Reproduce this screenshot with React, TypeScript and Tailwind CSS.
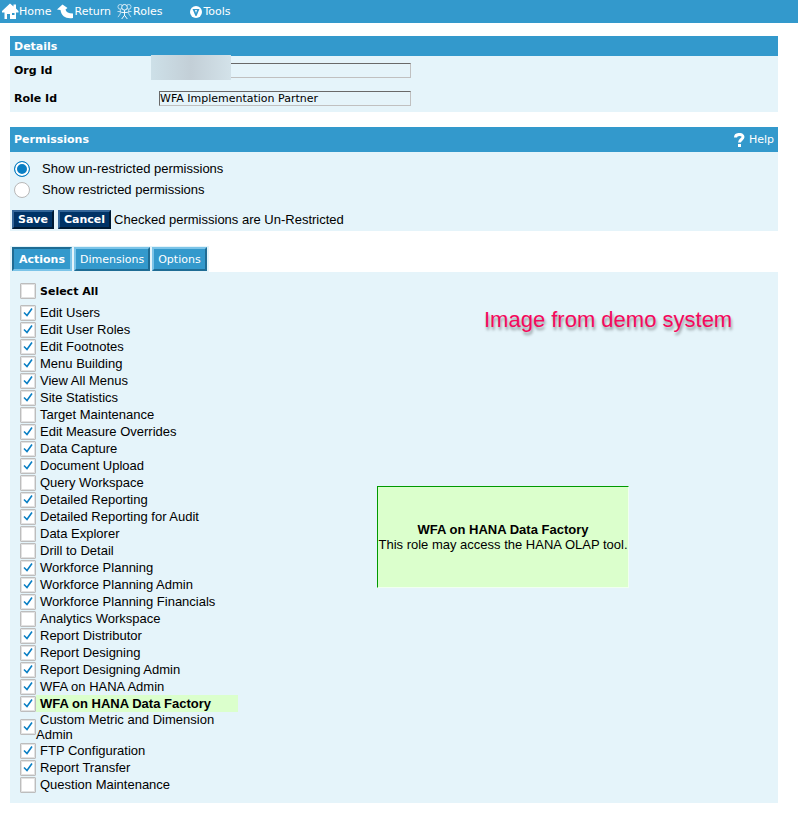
import { useState } from "react";

type Permission = { name: string; checked: boolean };

const PERMISSIONS: Permission[] = [
  { name: "Edit Users", checked: true },
  { name: "Edit User Roles", checked: true },
  { name: "Edit Footnotes", checked: true },
  { name: "Menu Building", checked: true },
  { name: "View All Menus", checked: true },
  { name: "Site Statistics", checked: true },
  { name: "Target Maintenance", checked: false },
  { name: "Edit Measure Overrides", checked: true },
  { name: "Data Capture", checked: true },
  { name: "Document Upload", checked: true },
  { name: "Query Workspace", checked: false },
  { name: "Detailed Reporting", checked: true },
  { name: "Detailed Reporting for Audit", checked: true },
  { name: "Data Explorer", checked: false },
  { name: "Drill to Detail", checked: false },
  { name: "Workforce Planning", checked: true },
  { name: "Workforce Planning Admin", checked: true },
  { name: "Workforce Planning Financials", checked: true },
  { name: "Analytics Workspace", checked: false },
  { name: "Report Distributor", checked: true },
  { name: "Report Designing", checked: true },
  { name: "Report Designing Admin", checked: true },
  { name: "WFA on HANA Admin", checked: true },
  { name: "WFA on HANA Data Factory", checked: true },
  { name: "Custom Metric and Dimension Admin", checked: true },
  { name: "FTP Configuration", checked: true },
  { name: "Report Transfer", checked: true },
  { name: "Question Maintenance", checked: false },
];

const ACTIVE = "WFA on HANA Data Factory";

function HomeIcon() {
  return (
    <svg width="17" height="17" viewBox="0 0 17 17" fill="#fff">
      <path d="M8 0.500 0 8v1.500h2.500V16H5v-5h3v5h6V9.500h2.500V8L14 5.500V1.500h-2.500v2z" />
      <path d="M10 10h2.500v2H10z" fill="#3399cc" />
    </svg>
  );
}

function ReturnIcon() {
  return (
    <svg width="17" height="15" viewBox="0 0 17 15" fill="#fff">
      <path d="M0 5.500 5.500 0.500 10.500 4 8.500 5.500C9 8 11.500 9.500 16 9.500V14C9 15 4.500 12.500 3.500 6z" />
    </svg>
  );
}

function RolesIcon() {
  return (
    <svg
      width="15"
      height="17"
      viewBox="0 0 16 17"
      fill="none"
      stroke="#c4e2f2"
      strokeWidth="1"
    >
      <circle cx="3.500" cy="3.500" r="2.500" />
      <circle cx="12.500" cy="3.500" r="2.500" />
      <path d="M3.500 6v5M0.500 8.500h4M3.500 11 1 14.500M12.500 6v5M11.500 8.500h4M12.500 11 15 14.500" />
      <circle cx="8" cy="4" r="3" fill="#3399cc" stroke="#fff" />
      <path d="M8 7v6M4.500 9.500h7M8 12.500 5 16.500M8 12.500l3 4" stroke="#fff" />
    </svg>
  );
}

function ToolsIcon() {
  return (
    <svg width="12" height="12" viewBox="0 0 12 12">
      <circle cx="6" cy="6" r="6" fill="#fff" />
      <path d="M2.500 3h7L6.500 10h-1z" fill="#3399cc" />
      <path d="M5 4h2L6 7z" fill="#fff" />
    </svg>
  );
}

function HelpIcon() {
  return (
    <svg width="11" height="14" viewBox="0 0 11 14">
      <path
        d="M1.500 4.500C1.500 0.500 9 0.500 9 4c0 2.500-3.500 2.500-3.500 5.500"
        fill="none"
        stroke="#fff"
        strokeWidth="3"
      />
      <path d="M4 11h3v3H4z" fill="#fff" />
    </svg>
  );
}

function CheckBox({
  id,
  checked,
  onChange,
}: {
  id: string;
  checked: boolean;
  onChange: () => void;
}) {
  return (
    <span className="grid shrink-0">
      <input
        id={id}
        type="checkbox"
        checked={checked}
        onChange={onChange}
        className="peer col-start-1 row-start-1 size-4 appearance-none rounded-[1px] border border-[#bdbdbd] bg-white shadow-[inset_0_0_0_1px_#e2e2e2]"
      />
      <svg
        viewBox="0 0 16 16"
        className="pointer-events-none invisible col-start-1 row-start-1 size-4 peer-checked:visible"
        fill="none"
        stroke="#0a7fc4"
        strokeWidth="1.600"
      >
        <path d="M4 7.500 7 10.500 12 3.500" />
      </svg>
    </span>
  );
}

function Tab({
  label,
  active,
  onClick,
}: {
  label: string;
  active: boolean;
  onClick: () => void;
}) {
  return (
    <button
      type="button"
      role="tab"
      aria-selected={active}
      onClick={onClick}
      className={
        active
          ? "h-6 border-2 border-t-[#1f6c94] border-r-[#7cc4e8] border-b-[#7cc4e8] border-l-[#1f6c94] bg-[#3399cc] px-[5px] font-bold text-white"
          : "h-6 border-2 border-t-[#7cc4e8] border-r-[#1f6c94] border-b-[#1f6c94] border-l-[#7cc4e8] bg-[#3399cc] px-1 text-white"
      }
    >
      {label}
    </button>
  );
}

const verdana = "font-['DejaVu_Sans',Verdana,sans-serif] text-[11px]";
const field =
  "h-[15px] w-[252px] border border-t-[#696969] border-r-[#c0c0c0] border-b-[#c0c0c0] border-l-[#696969] bg-transparent";
const darkButton =
  "h-[19px] border-2 border-t-[#336699] border-r-[#001a33] border-b-[#001a33] border-l-[#336699] bg-[#003366] px-1 leading-[15px] font-bold text-white";
const radio =
  "size-4 appearance-none rounded-full border border-[#b8b8b8] bg-white checked:border-[#0a7fc4] checked:bg-[#0a7fc4] checked:shadow-[inset_0_0_0_2px_white]";

export default function App() {
  const [permissions, setPermissions] = useState(PERMISSIONS);
  const [mode, setMode] = useState("unrestricted");
  const [tab, setTab] = useState("Actions");

  const toggle = (index: number) => {
    setPermissions((prev) =>
      prev.map((p, i) => (i === index ? { ...p, checked: !p.checked } : p))
    );
  };

  const allChecked = permissions.every((p) => p.checked);

  return (
    <div className="min-h-screen bg-white font-['Liberation_Sans',Arial,sans-serif] text-[13px] leading-[15px] text-black">
      <nav className={`flex h-[23px] items-center bg-[#3399cc] pl-0.5 text-white ${verdana}`}>
        <a href="#home" className="flex items-center">
          <HomeIcon />
          Home
        </a>
        <a href="#return" className="ml-1.5 flex items-center">
          <ReturnIcon />
          Return
        </a>
        <a href="#roles" className="ml-1.5 flex items-center gap-px">
          <RolesIcon />
          Roles
        </a>
        <a href="#tools" className="ml-7 flex items-center gap-px">
          <ToolsIcon />
          Tools
        </a>
      </nav>

      <main className="mr-5 ml-2.5 pt-[13px]">
        <section className="bg-[#e5f4fa]">
          <h2 className={`flex h-5 items-center bg-[#3399cc] px-1 font-bold text-white ${verdana}`}>
            Details
          </h2>
          <div className={`flex h-7 items-center pl-1 ${verdana}`}>
            <label htmlFor="org" className="w-[145px] font-bold">
              Org Id
            </label>
            <div className="relative flex">
              <input id="org" readOnly className={field} />
              <div className="absolute -top-2 -left-2 h-[25px] w-20 bg-linear-to-r from-[#cde0e8] via-[#c3cfd7] to-[#d3e2e9]" />
            </div>
          </div>
          <div className={`flex h-7 items-center pl-1 ${verdana}`}>
            <label htmlFor="role" className="w-[145px] font-bold">
              Role Id
            </label>
            <input id="role" defaultValue="WFA Implementation Partner" className={field} />
          </div>
        </section>

        <section className="mt-[15px] bg-[#e5f4fa]">
          <div className={`flex h-[25px] items-center justify-between bg-[#3399cc] px-1 text-white ${verdana}`}>
            <h2 className="font-bold">Permissions</h2>
            <a href="#help" className="flex items-center gap-1">
              <HelpIcon />
              Help
            </a>
          </div>
          <div className="h-[79px] pt-1.5">
            <div className="flex h-[21px] items-center gap-3 pl-1">
              <input
                id="unrestricted"
                type="radio"
                name="mode"
                checked={mode === "unrestricted"}
                onChange={() => setMode("unrestricted")}
                className={radio}
              />
              <label htmlFor="unrestricted">Show un-restricted permissions</label>
            </div>
            <div className="flex h-[21px] items-center gap-3 pl-1">
              <input
                id="restricted"
                type="radio"
                name="mode"
                checked={mode === "restricted"}
                onChange={() => setMode("restricted")}
                className={radio}
              />
              <label htmlFor="restricted">Show restricted permissions</label>
            </div>
            <div className="mt-2.5 flex items-center pl-0.5">
              <button type="button" className={`${darkButton} ${verdana}`}>
                Save
              </button>
              <button type="button" className={`ml-1 ${darkButton} ${verdana}`}>
                Cancel
              </button>
              <span className="ml-[3px]">Checked permissions are Un-Restricted</span>
            </div>
          </div>
        </section>

        <div
          role="tablist"
          className={`mt-[15px] flex w-fit gap-0.5 bg-[#e5f4fa] px-0.5 pt-px pb-px ${verdana}`}
        >
          {["Actions", "Dimensions", "Options"].map((name) => (
            <Tab key={name} label={name} active={tab === name} onClick={() => setTab(name)} />
          ))}
        </div>

        <section className="relative bg-[#e5f4fa] px-2.5 pt-[11px] pb-2.5">
          <div className={`mb-[5px] flex h-4 items-center ${verdana}`}>
            <CheckBox
              id="all"
              checked={allChecked}
              onChange={() =>
                setPermissions((prev) => prev.map((p) => ({ ...p, checked: !allChecked })))
              }
            />
            <label htmlFor="all" className="pl-1 font-bold">
              Select All
            </label>
          </div>
          <ul className="w-[218px]">
            {permissions.map((p, i) => (
              <li key={p.name} className="flex min-h-[17px] items-center">
                <CheckBox id={`p${i}`} checked={p.checked} onChange={() => toggle(i)} />
                <label
                  htmlFor={`p${i}`}
                  className={
                    p.name === ACTIVE
                      ? "flex-1 bg-[#dbffcc] py-px indent-1 font-bold"
                      : "flex-1 indent-1"
                  }
                >
                  {p.name}
                </label>
              </li>
            ))}
          </ul>

          <p className="absolute top-9 left-[474px] text-[22px] leading-6 whitespace-nowrap text-[#f5085c] [text-shadow:1px_3px_3px_rgba(0,0,0,0.4)]">
            Image from demo system
          </p>
          <div
            role="tooltip"
            className="absolute top-[214px] left-[367px] flex h-[102px] w-[252px] flex-col items-center justify-center border border-t-[#009900] border-r-[#f0fff0] border-b-[#f0fff0] border-l-[#009900] bg-[#dbffcc] whitespace-nowrap"
          >
            <b>{ACTIVE}</b>
            <span>This role may access the HANA OLAP tool.</span>
          </div>
        </section>
      </main>
    </div>
  );
}
